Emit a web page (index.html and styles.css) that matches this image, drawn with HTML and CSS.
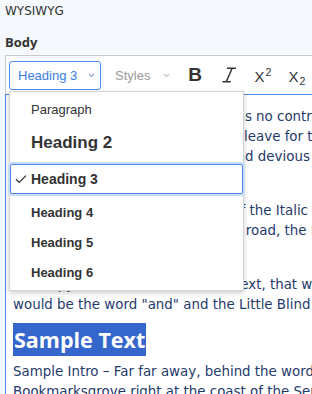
FILE: index.html
```html
<!DOCTYPE html>
<html>
<head>
<meta charset="utf-8">
<link rel="stylesheet" href="styles.css">
</head>
<body>
<div class="page">
  <div class="title">WYSIWYG</div>
  <div class="label">Body</div>
  <div class="editor">
    <div class="toolbar">
      <div class="fmt-btn"><span>Heading 3</span><svg class="chev chev-blue" width="7" height="5" viewBox="0 0 7 5"><path d="M1 1 L3.5 3.5 L6 1" fill="none" stroke="currentColor" stroke-width="1.1"/></svg></div>
      <div class="styles-btn"><span>Styles</span><svg class="chev chev-gray" width="7" height="5" viewBox="0 0 7 5"><path d="M1 1 L3.5 3.5 L6 1" fill="none" stroke="currentColor" stroke-width="1.1"/></svg></div>
      <div class="tool tool-b">B</div>
      <div class="tool"><svg width="16" height="16" viewBox="0 0 16 16"><path d="M6 1.2 H15 M11.2 1.2 L5.2 14.8 M1.5 14.8 H9.8" fill="none" stroke="#333" stroke-width="1.5"/></svg></div>
      <div class="tool tool-x"><span>X<sup class="sup">2</sup></span></div>
      <div class="tool tool-x"><span>X<sub class="sub">2</sub></span></div>
    </div>
    <div class="content">
      <p class="para">Oddly, the all-powerful Pointing has no control about the blind texts<br>One day, Lorem Ipsum decided to leave for the far World of Grammar.<br>Commas, wild, Question Marks, and devious <span class="spell">Semikoli</span>, but the Little</p>
      <p class="para">She packed her seven versalia.<br>When she reached the final hills of the Italic Mountains, she had<br>Village and the subline of her own road, the Line Lane.</p>
      <p class="para">Pityful a rethoric question ran.<br>The copy warned the Little Blind Text, that where it came from<br>would be the word "and" and the Little Blind Text should turn around</p>
      <h2 class="sample-h"><span class="hl">Sample Text</span></h2>
      <p class="intro">Sample Intro – Far far away, behind the word mountains, far from<br>Bookmarksgrove right at the coast of the Semantics, a large language ocean.</p>
    </div>
    <div class="dropdown">
      <div class="dd-item dd-p">Paragraph</div>
      <div class="dd-item dd-h2">Heading 2</div>
      <div class="dd-item dd-h3"><svg class="check" width="12" height="10" viewBox="0 0 12 10"><path d="M1 5.2 L4.2 8.4 L11 1.6" fill="none" stroke="#333" stroke-width="1.3"/></svg>Heading 3</div>
      <div class="dd-item dd-h">Heading 4</div>
      <div class="dd-item dd-h">Heading 5</div>
      <div class="dd-item dd-h">Heading 6</div>
    </div>
  </div>
</div>
</body>
</html>
```
FILE: styles.css
```css
html, body {
  margin: 0;
  background: #f5f9fe;
  overflow: hidden;
}
body {
  width: 312px;
  height: 394px;
}
.page {
  padding-left: 5px;
}
.title {
  font: 12px/16px "DejaVu Sans", sans-serif;
  color: #333;
  padding-top: 3px;
}
.label {
  font: 700 13px/18px "Open Sans", sans-serif;
  color: #333;
  margin-top: 14px;
}
.editor {
  position: relative;
  margin-top: 4px;
  margin-right: -60px;
  background: #fff;
}
.toolbar {
  display: flex;
  align-items: center;
  height: 39px;
  box-sizing: border-box;
  border: 1px solid #c9c9c9;
  border-bottom: 0;
  padding: 0 3px;
  font-family: "Liberation Sans", Arial, sans-serif;
}
.fmt-btn {
  display: flex;
  align-items: center;
  width: 92px;
  height: 29px;
  box-sizing: border-box;
  border: 1px solid #4a89ec;
  border-radius: 3px;
  padding-left: 8px;
  font-size: 13px;
  color: #3a7de0;
}
.chev-blue {
  margin-left: 11px;
  color: #8da6cc;
}
.styles-btn {
  display: flex;
  align-items: center;
  width: 71px;
  height: 29px;
  box-sizing: border-box;
  margin-left: 6px;
  padding-left: 8px;
  font-size: 13px;
  color: #9a9a9a;
}
.chev-gray {
  margin-left: 13px;
  color: #c4c4c4;
}
.tool {
  display: flex;
  justify-content: center;
  align-items: center;
  width: 34px;
  height: 29px;
  color: #333;
}
.tool-b {
  font-weight: 700;
  font-size: 19px;
}
.tool-x {
  font-size: 15px;
  line-height: 15px;
  padding-top: 2px;
  box-sizing: border-box;
}
.sup {
  font-size: 10.5px;
  line-height: 0;
  vertical-align: 6px;
  margin-left: 1px;
}
.sub {
  font-size: 10.5px;
  line-height: 0;
  vertical-align: -3px;
  margin-left: 1px;
}
.content {
  border-top: 1px solid #4a89ec;
  border-left: 1px solid #4a89ec;
  padding: 12px 0 0 7px;
  height: 320px;
  white-space: nowrap;
  font: 13.4px/20px "DejaVu Sans", sans-serif;
  color: #1f3a6b;
}
.para {
  margin: 0;
}
.para + .para {
  margin-top: 14px;
}
.spell {
  text-decoration: underline wavy #e04040;
  text-decoration-thickness: 1px;
}
.sample-h {
  margin: 8px 0 6px;
  font: 700 21.5px/33px "Open Sans", sans-serif;
}
.hl {
  display: inline-block;
  background: #3566cc;
  color: #fff;
  padding: 0 1px;
}
.intro {
  margin: 0;
}
.dropdown {
  position: absolute;
  left: 4px;
  top: 36px;
  width: 235px;
  height: 200px;
  box-sizing: border-box;
  border: 1px solid #d4d4d4;
  background: #fff;
  box-shadow: 0 2px 5px rgba(0, 0, 0, 0.2);
  padding: 2px 0 3px;
  font-family: "Liberation Sans", Arial, sans-serif;
  color: #333;
}
.dd-item {
  position: relative;
  display: flex;
  align-items: center;
  height: 30px;
  box-sizing: border-box;
  padding-left: 21px;
}
.dd-p {
  font-size: 13px;
}
.dd-h2 {
  height: 38px;
  font-size: 17px;
  font-weight: 700;
}
.dd-h3 {
  margin: 2px 0 3px;
  padding-left: 20px;
  border: 1px solid #4a89ec;
  border-radius: 2px;
  box-shadow: 0 0 0 2px #cadcf7;
  font-size: 14px;
  font-weight: 700;
}
.check {
  position: absolute;
  left: 4px;
  top: 9px;
}
.dd-h {
  font-size: 13px;
  font-weight: 700;
}
```
